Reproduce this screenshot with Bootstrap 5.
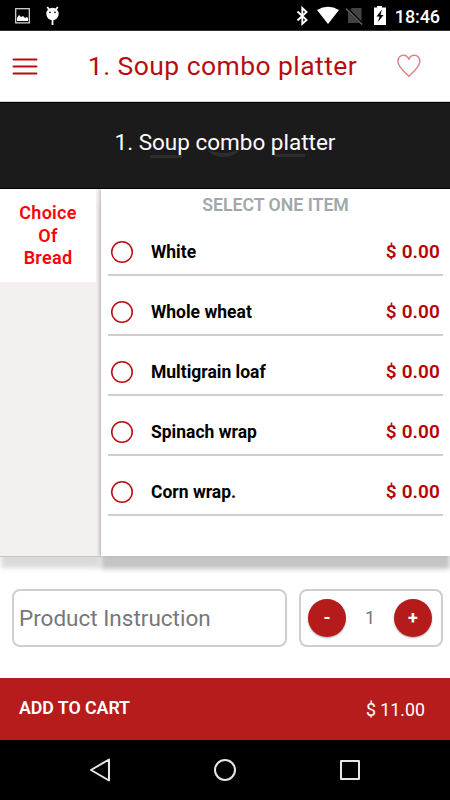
<!DOCTYPE html>
<html lang="en">
<head>
<meta charset="utf-8">
<meta name="viewport" content="width=device-width, initial-scale=1">
<title>Soup combo platter</title>
<link href="https://cdn.jsdelivr.net/npm/bootstrap@5.3.0/dist/css/bootstrap.min.css" rel="stylesheet">
<style>
  body { font-family: Roboto, "Liberation Sans", sans-serif; width: 450px; height: 800px; line-height: 1; color: #000; }
  svg { display: block; flex: none; }
  .status { height: 31px; background: #000; color: #fff; border-bottom: 1px solid #333; padding: 0 10px 0 15px; }
  .clock { font-size: 18px; font-weight: 500; letter-spacing: -.1px; padding-top: 3px; }
  .topbar { height: 71px; padding: 0 29px 0 12px; border-bottom: 1px solid #d6d6d6; color: #b80d10; }
  .topbar h1 { font-size: 26.5px; font-weight: 400; letter-spacing: .43px; padding: 0 0 0 10px; }
  .hero { height: 87px; background: #1b1b1b; border-top: 1px solid #000; border-bottom: 1px solid #000; color: #fff; }
  .hero h2 { font-size: 22.5px; font-weight: 400; padding-bottom: 6px; position: relative; }
  .emblem { position: absolute; left: 148px; top: 31px; }
  .options { height: 368px; z-index: 1; }
  .side { width: 101px; background: #f4f0ef; border-bottom: 1px solid #c5c3c3; box-shadow: 0 12px 5px -1px #dadada; }
  .side-tab { height: 93px; width: 96px; background: #fff; color: #fb0207; font-size: 18px; font-weight: 600; line-height: 22.5px; letter-spacing: .3px; padding-top: 13px; }
  .panel { background: #fff; box-shadow: -1px 0 3px #b9b9b9, 0 13px 5px 0 #c4c4c4; padding: 0 7px; clip-path: inset(0 0 -25px -8px); height: 367px; }
  .panel-head { height: 27px; padding-top: 8px; font-size: 17.7px; font-weight: 600; color: #a1a8ab; letter-spacing: 0; }
  .choice { height: 60px; border-bottom: 2px solid #cfcfcf; padding: 14px 3px 0 3px; font-size: 17.5px; font-weight: 700; }
  .choice .tag { padding-top: 2px; }
  .ring { width: 22px; height: 22px; box-shadow: inset 0 0 0 1.5px #b90d10; border-radius: 50%; margin-right: 18px; }
  .cost { color: #b40406; font-size: 19px; font-weight: 600; letter-spacing: .1px; padding-bottom: 2px; }
  .order { height: 121px; padding: 32px 7px 0 12px; }
  .field { height: 58px; border: 2px solid #cfcfcf; border-radius: 8px; background: #fff; color: #777; }
  .note { width: 275px; font-size: 22.5px; padding: 1px 5px 0; }
  .qty { width: 144px; padding: 0 9px 0 7px; font-size: 18px; }
  .round { width: 38px; height: 38px; border-radius: 50%; border: 0; background: #b51b1b; color: #fff; font-size: 18px; font-weight: 700; box-shadow: 0 1px 2px #0005; }
  .cart { height: 62px; background: #b51c1b; color: #fff; padding: 0 25px 0 19px; font-size: 17.8px; }
  .cart b { font-weight: 600; padding-bottom: 2px; letter-spacing: -.05px; }
  .cart span { padding-top: 1px; }
  .softkeys { height: 60px; background: #000; }
</style>
</head>
<body class="bg-white overflow-hidden m-0">
<div class="status d-flex align-items-center">
  <svg width="48" height="30" viewBox="0 0 48 30" fill="#fff">
    <rect x=".7" y="8.7" width="13.6" height="14.2" fill="none" stroke="#e0e0e0" stroke-width="1.2"/>
    <path d="M2 21v-3l2-3 2 2 2-1 2 2 2-1 1 1v3z"/>
    <circle cx="37.5" cy="14" r="6.2"/>
    <path d="M32.2 7l2.4 3M42.8 7l-2.4 3M37.5 20v5" stroke="#fff" stroke-width="1.8"/>
    <circle cx="35" cy="12.4" r=".8" fill="#000"/><circle cx="40" cy="12.4" r=".8" fill="#000"/>
  </svg>
  <svg class="ms-auto" width="99" height="30" viewBox="296 0 99 30" fill="#fff">
    <path d="M297.500 11.500l9 8.400-4.200 4V8l4.200 4-9 8.500" fill="none" stroke="#fff" stroke-width="1.900"/>
    <path d="M317 10Q328 3.500 339 10L328 24z"/>
    <path d="M352 8h9.500v15H348V12z" fill="#444"/>
    <path d="M346.500 8l16 16.500" stroke="#000" stroke-width="3"/><path d="M346 8.500l16 16" stroke="#666" stroke-width="1.400"/>
    <path d="M374 7.500h3V6h5v1.500h4V25h-12z"/><path d="M382 9.500l-5.500 7h3l-1.500 5.500 5.500-7h-3z" fill="#000"/>
  </svg>
  <div class="clock">18:46</div>
</div>
<header class="topbar d-flex align-items-center justify-content-between">
  <svg width="26" height="20" viewBox="0 0 26 20" stroke="#b80d10" stroke-width="1.900" stroke-linecap="round"><path d="M1.500 3.500h23M1.500 10.500h23M1.500 17.500h23"/></svg>
  <h1 class="m-0">1. Soup combo platter</h1>
  <svg width="24" height="24" viewBox="0 0 24 24" fill="none" stroke="#dc8587" stroke-width="1.500" stroke-linejoin="round"><path d="M11.900 22.200C8 18.500.9 13 .9 7.300.9 3.700 3.400 1.300 6.300 1.300c2.600 0 4.600 1.500 5.600 3.900 1-2.400 3-3.900 5.600-3.900 2.900 0 5.400 2.400 5.400 6 0 5.700-7.100 11.200-11 14.900z"/></svg>
</header>
<section class="hero d-flex align-items-center justify-content-center position-relative">
  <svg class="emblem" width="158" height="24" fill="#2d2d2d"><path d="M2 21h32v3H2zM126 20h31v3h-31zM59 15q16 8 33 0-5 8-17 8-11 0-16-8z"/></svg>
  <h2 class="m-0">1. Soup combo platter</h2>
</section>
<main class="options d-flex position-relative">
  <aside class="side flex-shrink-0"><div class="side-tab text-center">Choice<br>Of<br>Bread</div></aside>
  <section class="panel flex-grow-1">
    <div class="panel-head text-center">SELECT ONE ITEM</div>
    <div class="choice d-flex align-items-center"><span class="ring"></span><span class="tag">White</span><span class="cost ms-auto">$ 0.00</span></div>
    <div class="choice d-flex align-items-center"><span class="ring"></span><span class="tag">Whole wheat</span><span class="cost ms-auto">$ 0.00</span></div>
    <div class="choice d-flex align-items-center"><span class="ring"></span><span class="tag">Multigrain loaf</span><span class="cost ms-auto">$ 0.00</span></div>
    <div class="choice d-flex align-items-center"><span class="ring"></span><span class="tag">Spinach wrap</span><span class="cost ms-auto">$ 0.00</span></div>
    <div class="choice d-flex align-items-center"><span class="ring"></span><span class="tag">Corn wrap.</span><span class="cost ms-auto">$ 0.00</span></div>
  </section>
</main>
<section class="order d-flex justify-content-between">
  <div class="field note d-flex align-items-center">Product Instruction</div>
  <div class="field qty d-flex align-items-center justify-content-between">
    <button class="round p-0">-</button><span>1</span><button class="round p-0">+</button>
  </div>
</section>
<footer class="cart d-flex align-items-center justify-content-between"><b>ADD TO CART</b><span>$ 11.00</span></footer>
<nav class="softkeys">
  <svg width="450" height="60" fill="none" stroke="#e6e6e6" stroke-width="2" stroke-linejoin="round"><path d="M91 30l18-10.500v21z"/><circle cx="225" cy="30" r="10"/><rect x="341" y="21" width="18" height="18"/></svg>
</nav>
<script src="https://cdn.jsdelivr.net/npm/bootstrap@5.3.0/dist/js/bootstrap.bundle.min.js"></script>
</body>
</html>
